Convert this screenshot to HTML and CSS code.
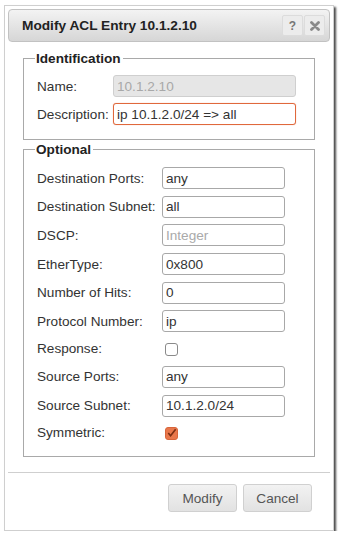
FILE: index.html
```html
<!DOCTYPE html>
<html>
<head>
<meta charset="utf-8">
<link rel="stylesheet" href="styles.css">
</head>
<body>
<div class="dialog">
  <div class="header">
    <span class="title">Modify ACL Entry 10.1.2.10</span>
    <span class="hbtn help">?</span>
    <span class="hbtn close"><svg width="10" height="10" viewBox="0 0 10 10"><path d="M1.5 1.5 L8.5 8.5 M8.5 1.5 L1.5 8.5" stroke="#8a8a8a" stroke-width="2.8" stroke-linecap="round"/></svg></span>
  </div>
  <fieldset class="group ident">
    <legend>Identification</legend>
    <div class="grid grid-ident">
      <label>Name:</label><input class="field disabled" value="10.1.2.10" disabled>
      <label>Description:</label><input class="field focus" value="ip 10.1.2.0/24 =&gt; all">
    </div>
  </fieldset>
  <fieldset class="group opt">
    <legend>Optional</legend>
    <div class="grid grid-opt">
      <label>Destination Ports:</label><input class="field" value="any">
      <label>Destination Subnet:</label><input class="field" value="all">
      <label>DSCP:</label><input class="field" placeholder="Integer">
      <label>EtherType:</label><input class="field" value="0x800">
      <label>Number of Hits:</label><input class="field" value="0">
      <label>Protocol Number:</label><input class="field" value="ip">
      <label class="cbrow">Response:</label><span class="cbcell"><span class="cb"></span></span>
      <label>Source Ports:</label><input class="field" value="any">
      <label>Source Subnet:</label><input class="field" value="10.1.2.0/24">
      <label class="cbrow">Symmetric:</label><span class="cbcell"><span class="cb checked"><svg width="12" height="12" viewBox="0 0 12 12"><path d="M2.5 6 L5 9 L10.5 2" fill="none" stroke="#7a2e12" stroke-width="1.8"/></svg></span></span>
    </div>
  </fieldset>
  <div class="sep"></div>
  <div class="actions">
    <button class="btn">Modify</button>
    <button class="btn">Cancel</button>
  </div>
</div>
</body>
</html>
```

FILE: styles.css
```css
* { box-sizing: border-box; }
body {
  margin: 0;
  background: #fff;
  font-family: "Liberation Sans", Arial, sans-serif;
  font-size: 13.6px;
  color: #333;
}
.dialog {
  margin: 5px 0 0 4px;
  width: 330px;
  height: 526px;
  border: 1px solid #cfcfcf;
  box-shadow: 2px 2px 2px rgba(0,0,0,0.7);
  padding: 3px;
  background: #fff;
}
.header {
  height: 33px;
  display: flex;
  align-items: center;
  padding: 0 4px 0 13px;
  border: 1px solid #c2c2c2;
  border-radius: 4px;
  background: linear-gradient(#f3f3f3, #d6d6d6);
}
.title {
  flex: 1;
  font-weight: bold;
  font-size: 13.7px;
  color: #222;
}
.hbtn {
  width: 21px;
  height: 21px;
  display: flex;
  align-items: center;
  justify-content: center;
  background: #ececec;
  border: 1px solid #dcdcdc;
  border-radius: 2px;
  color: #777;
  font-weight: bold;
  font-size: 12px;
}
.help { margin-right: 1px; }
.group {
  margin: 9px 15px 0 15px;
  width: 292px;
  border: 1px solid #a9a9a9;
  padding: 9px 10px 14px 13px;
}
.group legend {
  font-weight: bold;
  font-size: 13.6px;
  color: #222;
  padding: 0 2px 0 1px;
  margin-left: -2px;
  line-height: 15px;
}
.opt { margin-top: 2px; padding-top: 10px; padding-bottom: 13px; }
.grid {
  display: grid;
  align-items: center;
}
.grid-ident {
  grid-template-columns: 76px 183px;
  row-gap: 6px;
}
.grid-opt {
  grid-template-columns: 125px 123px;
  row-gap: 6.7px;
}
label { color: #333; white-space: nowrap; }
.field {
  height: 22px;
  border: 1px solid #a8a8a8;
  border-radius: 3px;
  padding: 0 3px;
  font-family: "Liberation Sans", Arial, sans-serif;
  font-size: 13.6px;
  color: #333;
  background: #fff;
  outline: none;
}
.field::placeholder { color: #aaa; }
.field.disabled {
  background: #e6e6e6;
  border-color: #cfcfcf;
  color: #a8a8a8;
}
.field.focus {
  border-color: #e0683c;
  box-shadow: 0 0 1px rgba(224,104,60,0.6);
}
.cbcell { height: 20px; display: flex; align-items: center; }
.cbrow { height: 20px; line-height: 20px; }
.cb {
  margin-left: 3px;
  width: 13px;
  height: 13px;
  border: 1px solid #8a8a8a;
  border-radius: 3px;
  background: #fff;
  display: flex;
  align-items: center;
  justify-content: center;
}
.cb.checked {
  background: #e8774b;
  border-color: #d8653a;
}
.sep {
  margin-top: 15px;
  height: 1px;
  background: #cfcfcf;
}
.actions {
  display: flex;
  justify-content: flex-end;
  gap: 6px;
  margin-top: 11px;
  padding-right: 18px;
}
.btn {
  width: 69px;
  height: 28px;
  border: 1px solid #d0d0d0;
  border-radius: 3px;
  background: linear-gradient(#f2f2f2, #e2e2e2);
  font-family: "Liberation Sans", Arial, sans-serif;
  font-size: 13.6px;
  color: #555;
  padding: 0;
}
```
